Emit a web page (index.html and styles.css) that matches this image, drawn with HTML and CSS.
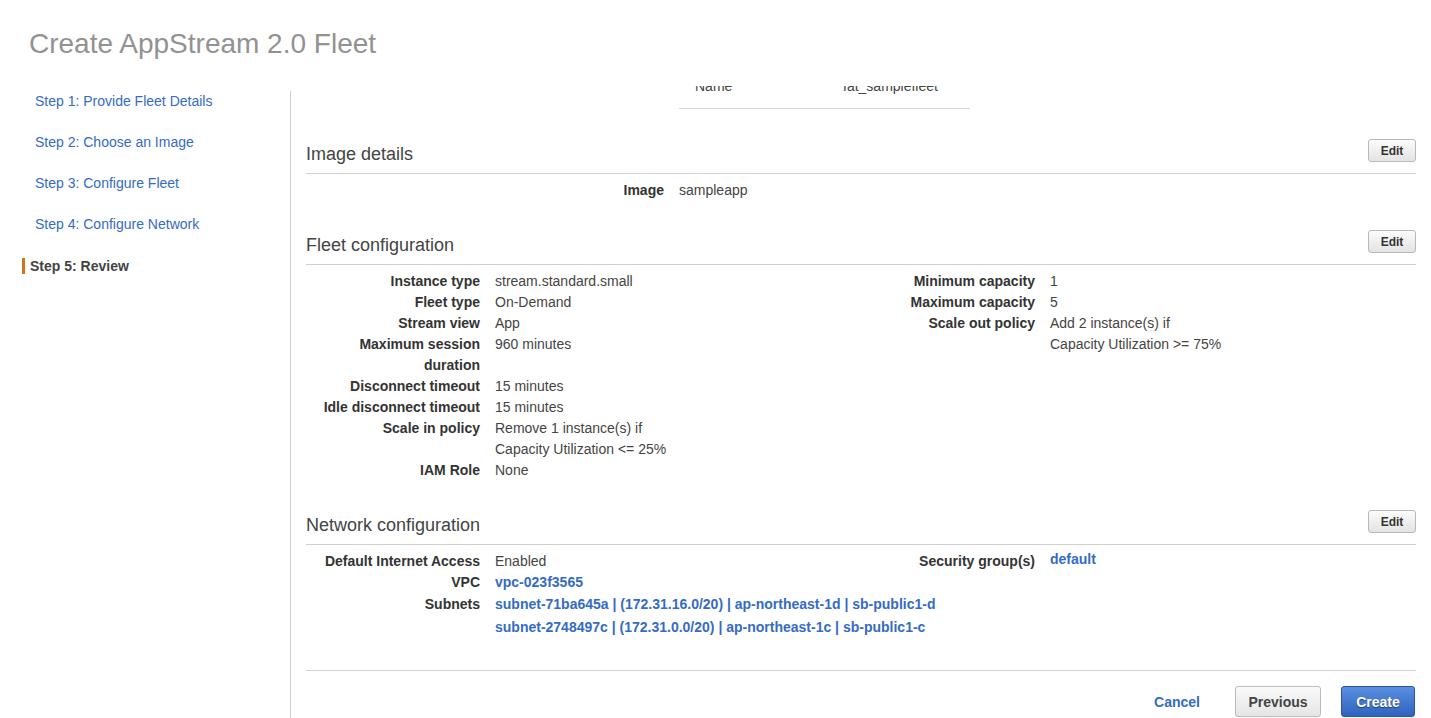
FILE: index.html
```html
<!DOCTYPE html>
<html lang="en">
<head>
<meta charset="utf-8">
<title>Create AppStream 2.0 Fleet</title>
<link rel="stylesheet" href="styles.css">
</head>
<body>
<h1 class="page-title">Create AppStream 2.0 Fleet</h1>
<div class="layout">
  <nav class="sidebar">
    <a class="step" href="#">Step 1: Provide Fleet Details</a>
    <a class="step" href="#">Step 2: Choose an Image</a>
    <a class="step" href="#">Step 3: Configure Fleet</a>
    <a class="step" href="#">Step 4: Configure Network</a>
    <span class="step step-active">Step 5: Review</span>
  </nav>
  <main class="main">
    <div class="main-inner">
      <div class="summary">
        <span class="summary-label">Name</span>
        <span class="summary-value">fat_samplefleet</span>
      </div>

      <section class="section">
        <div class="section-head">
          <h2 class="section-title">Image details</h2>
          <button class="btn-edit">Edit</button>
        </div>
        <div class="section-body">
          <div class="kv kv-image">
            <span class="k">Image</span><span class="v">sampleapp</span>
          </div>
        </div>
      </section>

      <section class="section">
        <div class="section-head">
          <h2 class="section-title">Fleet configuration</h2>
          <button class="btn-edit">Edit</button>
        </div>
        <div class="section-body cols">
          <div class="kv">
            <span class="k">Instance type</span><span class="v">stream.standard.small</span>
            <span class="k">Fleet type</span><span class="v">On-Demand</span>
            <span class="k">Stream view</span><span class="v">App</span>
            <span class="k">Maximum session duration</span><span class="v">960 minutes</span>
            <span class="k">Disconnect timeout</span><span class="v">15 minutes</span>
            <span class="k">Idle disconnect timeout</span><span class="v">15 minutes</span>
            <span class="k">Scale in policy</span><span class="v">Remove 1 instance(s) if<br>Capacity Utilization &lt;= 25%</span>
            <span class="k">IAM Role</span><span class="v">None</span>
          </div>
          <div class="kv">
            <span class="k">Minimum capacity</span><span class="v">1</span>
            <span class="k">Maximum capacity</span><span class="v">5</span>
            <span class="k">Scale out policy</span><span class="v">Add 2 instance(s) if<br>Capacity Utilization &gt;= 75%</span>
          </div>
        </div>
      </section>

      <section class="section">
        <div class="section-head">
          <h2 class="section-title">Network configuration</h2>
          <button class="btn-edit">Edit</button>
        </div>
        <div class="section-body cols">
          <div class="kv">
            <span class="k">Default Internet Access</span><span class="v">Enabled</span>
            <span class="k">VPC</span><span class="v"><a class="link" href="#">vpc-023f3565</a></span>
            <span class="k k-tall">Subnets</span><span class="v v-links"><a class="link" href="#">subnet-71ba645a | (172.31.16.0/20) | ap-northeast-1d | sb-public1-d</a><a class="link" href="#">subnet-2748497c | (172.31.0.0/20) | ap-northeast-1c | sb-public1-c</a></span>
          </div>
          <div class="kv">
            <span class="k">Security group(s)</span><span class="v"><a class="link link-up" href="#">default</a></span>
          </div>
        </div>
      </section>

      <div class="footer">
        <a class="btn-cancel" href="#">Cancel</a>
        <button class="btn btn-prev">Previous</button>
        <button class="btn btn-create">Create</button>
      </div>
    </div>
  </main>
</div>
</body>
</html>
```

FILE: styles.css
```css
* { box-sizing: border-box; }

html, body {
  margin: 0;
  padding: 0;
  background: #fff;
  height: 718px;
  overflow: hidden;
}

body {
  font-family: "Liberation Sans", Arial, Helvetica, sans-serif;
  color: #444;
  font-size: 14px;
}

.page-title {
  margin: 0;
  padding: 28px 0 0 29px;
  height: 86px;
  font-size: 28px;
  line-height: 32px;
  font-weight: normal;
  color: #929292;
}

.layout {
  display: flex;
  height: 632px;
}

.sidebar {
  width: 291px;
  flex: none;
  margin-top: 5px;
  border-right: 1px solid #cfcfcf;
  display: flex;
  flex-direction: column;
}

.step {
  display: block;
  padding-left: 35px;
  font-size: 14px;
  line-height: 20px;
  margin-bottom: 21px;
  color: #356bc4;
  text-decoration: none;
}

.step-active {
  position: relative;
  margin-top: 1px;
  padding-left: 30px;
  font-weight: bold;
  color: #444;
}

.step-active::before {
  content: "";
  position: absolute;
  left: 22px;
  top: 2px;
  width: 3px;
  height: 16px;
  background: #d6731a;
}

.main {
  flex: 1;
  min-width: 0;
  overflow: hidden;
  padding: 0 15px;
}

.main-inner {
  margin-top: -10px;
}

.summary {
  display: flex;
  width: 291px;
  margin-left: 373px;
  padding: 0 0 11px 16px;
  border-bottom: 1px solid #d5d5d5;
  line-height: 21px;
  color: #444;
  margin-bottom: 1px;
}

.summary-label {
  width: 148px;
}

.section {
  margin-top: 29px;
}

.section:first-of-type {
  margin-top: 30px;
}

.section-head {
  display: flex;
  align-items: flex-end;
  justify-content: space-between;
  padding-bottom: 9px;
  border-bottom: 1px solid #d0d0d0;
}

.section-title {
  margin: 0 0 -1px;
  font-size: 18px;
  line-height: 22px;
  font-weight: normal;
  color: #444;
}

.btn-edit {
  margin-bottom: 2px;
  width: 48px;
  height: 23px;
  padding: 0;
  font-family: inherit;
  font-size: 12px;
  font-weight: bold;
  color: #333;
  background: linear-gradient(#fbfbfb, #e4e4e4);
  border: 1px solid #b8b8b8;
  border-radius: 3px;
}

.section-body {
  padding-top: 6px;
}

.cols {
  display: grid;
  grid-template-columns: minmax(0, 1fr) minmax(0, 1fr);
}

.kv {
  display: grid;
  grid-template-columns: 174px minmax(0, 1fr);
  column-gap: 15px;
  align-content: start;
  line-height: 21px;
}

.kv-image {
  grid-template-columns: 358px minmax(0, 1fr);
}

.k {
  text-align: right;
  font-weight: bold;
  color: #333;
}

.v {
  color: #444;
  white-space: nowrap;
}

.v-links {
  display: flex;
  flex-direction: column;
  line-height: 23px;
}

.k-tall {
  line-height: 23px;
}

.link {
  color: #356bc4;
  font-weight: bold;
  text-decoration: none;
}

.link-up {
  position: relative;
  top: -2px;
}

.footer {
  margin-top: 31px;
  border-top: 1px solid #d0d0d0;
  padding-top: 15px;
  display: flex;
  justify-content: flex-end;
  align-items: center;
}

.btn-cancel {
  font-size: 14px;
  font-weight: bold;
  color: #356bc4;
  text-decoration: none;
  margin-right: 35px;
}

.btn {
  height: 31px;
  padding: 0;
  font-family: inherit;
  font-size: 14px;
  font-weight: bold;
  border-radius: 3px;
}

.btn-prev {
  width: 86px;
  color: #444;
  background: linear-gradient(#fafafa, #e5e5e5);
  border: 1px solid #bcbcbc;
  margin-right: 20px;
}

.btn-create {
  width: 74px;
  margin-right: 1px;
  color: #fff;
  text-shadow: 0 1px 1px rgba(0, 0, 0, 0.45);
  background: linear-gradient(#5a8fe0, #2f63c0);
  border: 1px solid #2a55a0;
}
```
